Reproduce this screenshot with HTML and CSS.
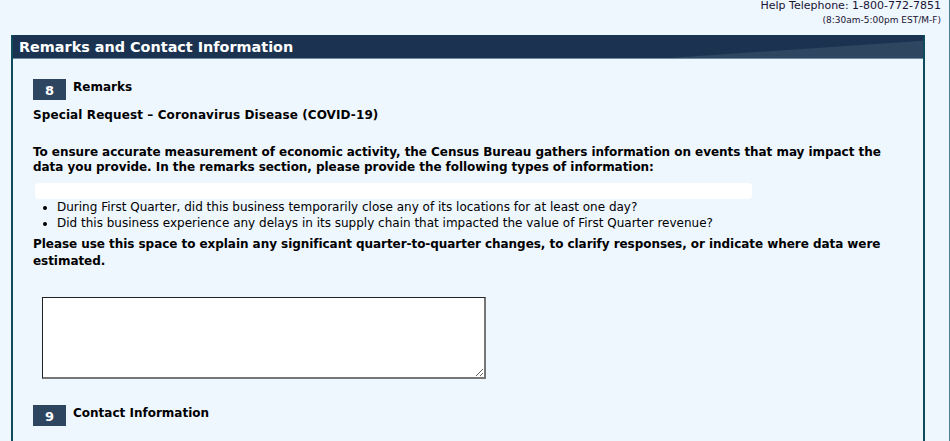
FILE: index.html
```html
<!DOCTYPE html>
<html>
<head>
<meta charset="utf-8">
<link rel="stylesheet" href="styles.css">
</head>
<body>
<div class="page">
  <div class="help">
    <div class="help-phone">Help Telephone: 1-800-772-7851</div>
    <div class="help-hours">(8:30am-5:00pm EST/M-F)</div>
  </div>
  <div class="panel">
    <div class="panel-head">Remarks and Contact Information</div>
    <div class="panel-body">
      <div class="item-head">
        <span class="badge">8</span>
        <span class="item-title">Remarks</span>
      </div>
      <p class="bold special">Special Request – Coronavirus Disease (COVID-19)</p>
      <p class="bold intro">To ensure accurate measurement of economic activity, the Census Bureau gathers information on events that may impact the data you provide. In the remarks section, please provide the following types of information:</p>
      <div class="blank-bar"></div>
      <ul class="questions">
        <li>During First Quarter, did this business temporarily close any of its locations for at least one day?</li>
        <li>Did this business experience any delays in its supply chain that impacted the value of First Quarter revenue?</li>
      </ul>
      <p class="bold explain">Please use this space to explain any significant quarter-to-quarter changes, to clarify responses, or indicate where data were estimated.</p>
      <textarea class="remarks-box"></textarea>
      <div class="item-head contact">
        <span class="badge">9</span>
        <span class="item-title">Contact Information</span>
      </div>
    </div>
  </div>
</div>
</body>
</html>
```

FILE: styles.css
```css
html, body {
  margin: 0;
  padding: 0;
  background: #eef6fe;
}
body {
  font-family: "DejaVu Sans", Verdana, sans-serif;
  color: #000;
  overflow: hidden;
}
.page {
  width: 949px;
  height: 441px;
  border-right: 1px solid #4f7f95;
}
.help {
  text-align: right;
  padding-right: 8px;
  color: #1a1433;
}
.help-phone {
  font-size: 11px;
  line-height: 12px;
  padding-top: 0;
}
.help-hours {
  font-size: 9px;
  line-height: 12px;
  padding-top: 2px;
}
.panel {
  margin-top: 9px;
  margin-left: 11px;
  width: 910px;
  height: 420px;
  border-left: 2px solid #0e4b5b;
  border-right: 2px solid #0e4b5b;
}
.panel-head {
  position: relative;
  height: 22px;
  line-height: 23px;
  background: #1b3350;
  border-top: 1px solid #12395a;
  border-bottom: 1px solid #6d8ca2;
  color: #fff;
  font-weight: bold;
  font-size: 14.4px;
  padding-left: 6px;
  overflow: hidden;
}
.panel-head::after {
  content: "";
  position: absolute;
  left: 0;
  right: 0;
  top: 0;
  bottom: 0;
  background: #2f4660;
  clip-path: polygon(72% 100%, 100% 22%, 100% 100%);
}
.panel-body {
  padding: 20px 20px 0 20px;
}
.item-head {
  display: flex;
  align-items: flex-start;
  gap: 7px;
}
.badge {
  width: 33px;
  height: 21px;
  background: #2e4560;
  color: #fff;
  font-weight: bold;
  font-size: 13px;
  line-height: 23px;
  text-align: center;
}
.item-title {
  font-weight: bold;
  font-size: 12px;
  line-height: 16px;
}
p {
  margin: 0;
}
.bold {
  font-weight: bold;
  font-size: 12px;
  letter-spacing: -0.05px;
}
.special {
  margin-top: 7px;
  line-height: 16px;
  letter-spacing: 0.1px;
}
.intro {
  margin-top: 22px;
  line-height: 15px;
}
.blank-bar {
  margin-top: 8px;
  margin-left: 2px;
  width: 717px;
  height: 16px;
  background: #fff;
  border-radius: 4px;
}
.questions {
  margin: 0;
  padding-left: 24px;
  font-size: 12px;
  line-height: 16px;
}
.explain {
  margin-top: 5px;
  line-height: 17px;
}
.remarks-box {
  display: block;
  margin: 27px 0 0 9px;
  width: 444px;
  height: 82px;
  box-sizing: border-box;
  border-style: solid;
  border-color: #222 #767676 #767676 #222;
  border-width: 1px 2px 2px 1px;
  background: #fff;
  resize: both;
  padding: 2px;
  font-family: "DejaVu Sans", sans-serif;
  font-size: 12px;
}
.contact {
  margin-top: 26px;
}
```
